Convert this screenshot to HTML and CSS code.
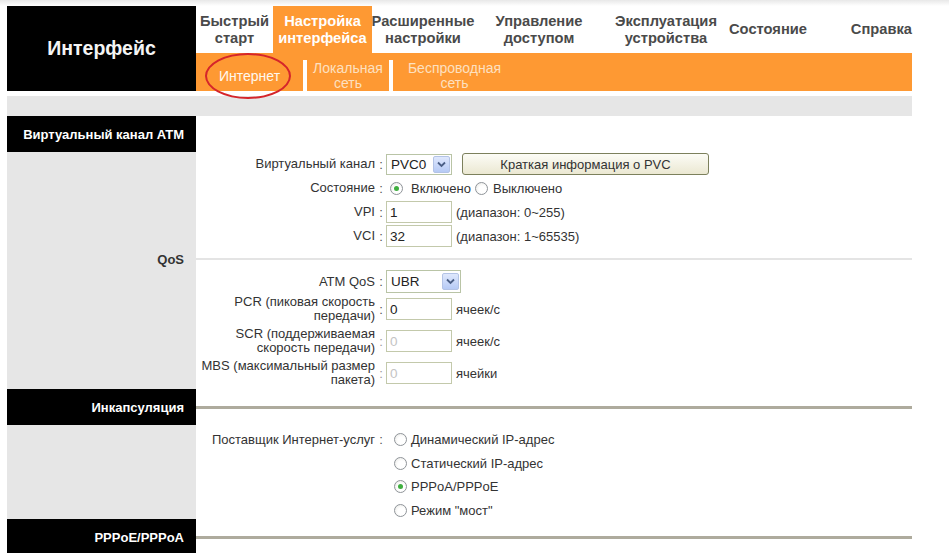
FILE: index.html
```html
<!DOCTYPE html>
<html lang="ru">
<head>
<meta charset="utf-8">
<title>Интерфейс</title>
<link rel="stylesheet" href="styles.css">
</head>
<body>
<div class="page">
  <header class="top">
    <div class="brand">Интерфейс</div>
    <div class="navs">
      <nav class="mainnav">
        <a class="tab t1">Быстрый<br>старт</a>
        <a class="tab t2 active">Настройка<br>интерфейса</a>
        <a class="tab t3">Расширенные<br>настройки</a>
        <a class="tab t4">Управление<br>доступом</a>
        <a class="tab t5">Эксплуатация<br>устройства</a>
        <a class="tab t6">Состояние</a>
        <a class="tab t7">Справка</a>
      </nav>
      <nav class="subnav">
        <a class="sub s1 current">Интернет<span class="ring"></span></a>
        <a class="sub s2">Локальная<br>сеть</a>
        <a class="sub s3">Беспроводная<br>сеть</a>
      </nav>
    </div>
  </header>

  <div class="graybar"></div>

  <main class="grid">
    <div class="head">Виртуальный канал ATM</div>
    <div class="blank"></div>

    <div class="side"></div>
    <div class="form">
      <div class="frow">
        <span class="lbl">Виртуальный канал</span><span class="col">:</span>
        <span class="val">
          <span class="sel w66">PVC0<span class="dd"><svg width="9" height="7" viewBox="0 0 9 7"><path d="M1 1.5 L4.5 5 L8 1.5" fill="none" stroke="#4b5f86" stroke-width="1.8"/></svg></span></span>
          <button class="pvcbtn" type="button">Краткая информация о PVC</button>
        </span>
      </div>
      <div class="frow">
        <span class="lbl">Состояние</span><span class="col">:</span>
        <span class="val">
          <span class="radio on first"></span>Включено<span class="radio second"></span>Выключено
        </span>
      </div>
      <div class="frow">
        <span class="lbl">VPI</span><span class="col">:</span>
        <span class="val"><span class="txt">1</span><span class="hint">(диапазон: 0~255)</span></span>
      </div>
      <div class="frow">
        <span class="lbl">VCI</span><span class="col">:</span>
        <span class="val"><span class="txt">32</span><span class="hint">(диапазон: 1~65535)</span></span>
      </div>
    </div>

    <div class="side qos">QoS</div>
    <div class="rulecell"><div class="rule light"></div></div>

    <div class="side"></div>
    <div class="form">
      <div class="frow r23">
        <span class="lbl">ATM QoS</span><span class="col">:</span>
        <span class="val">
          <span class="sel w74 h23">UBR<span class="dd"><svg width="9" height="7" viewBox="0 0 9 7"><path d="M1 1.5 L4.5 5 L8 1.5" fill="none" stroke="#4b5f86" stroke-width="1.8"/></svg></span></span>
        </span>
      </div>
      <div class="frow r32">
        <span class="lbl">PCR (пиковая скорость<br>передачи)</span><span class="col">:</span>
        <span class="val"><span class="txt">0</span><span class="hint">ячеек/с</span></span>
      </div>
      <div class="frow r32">
        <span class="lbl">SCR (поддерживаемая<br>скорость передачи)</span><span class="col dim">:</span>
        <span class="val"><span class="txt off">0</span><span class="hint">ячеек/с</span></span>
      </div>
      <div class="frow r32">
        <span class="lbl">MBS (максимальный размер<br>пакета)</span><span class="col dim">:</span>
        <span class="val"><span class="txt off">0</span><span class="hint">ячейки</span></span>
      </div>
    </div>

    <div class="head">Инкапсуляция</div>
    <div class="rulecell"><div class="rule dark"></div></div>

    <div class="side"></div>
    <div class="form isp">
      <div class="frow r235">
        <span class="lbl">Поставщик Интернет-услуг</span><span class="col">:</span>
        <span class="val"><span class="radio isp-r"></span>Динамический IP-адрес</span>
      </div>
      <div class="frow r235">
        <span class="lbl"></span><span class="col"></span>
        <span class="val"><span class="radio isp-r"></span>Статический IP-адрес</span>
      </div>
      <div class="frow r235">
        <span class="lbl"></span><span class="col"></span>
        <span class="val"><span class="radio on isp-r"></span>PPPoA/PPPoE</span>
      </div>
      <div class="frow r235">
        <span class="lbl"></span><span class="col"></span>
        <span class="val"><span class="radio isp-r"></span>Режим "мост"</span>
      </div>
    </div>

    <div class="head">PPPoE/PPPoA</div>
    <div class="rulecell"><div class="rule dark"></div></div>
  </main>
</div>
</body>
</html>
```

FILE: styles.css
```css
html, body {
  margin: 0;
  padding: 0;
}

body {
  background: #fff linear-gradient(#e8e8e8, #ffffff 6px) no-repeat;
  background-size: 100% 6px;
  font-family: "Liberation Sans", Arial, sans-serif;
  color: #333;
  overflow: hidden;
}

.page {
  margin: 6px 0 0 7px;
  width: 905px;
}

/* ---------- header ---------- */
.top {
  display: flex;
  height: 85px;
}

.brand {
  width: 189px;
  background: #000;
  color: #f4f4f4;
  font-weight: bold;
  font-size: 19.5px;
  display: flex;
  align-items: center;
  justify-content: center;
}

.navs {
  width: 716px;
  display: flex;
  flex-direction: column;
}

.mainnav {
  height: 47px;
  display: flex;
}

.tab {
  display: flex;
  align-items: center;
  justify-content: center;
  text-align: center;
  font-weight: bold;
  font-size: 14.7px;
  line-height: 17px;
  color: #4a4a4a;
  flex: none;
  white-space: nowrap;
}

.tab.active {
  background: #fe9933;
  color: #fff;
}

.t1 { width: 77px; }
.t2 { width: 99px; }
.t3 { width: 102px; }
.t4 { width: 130px; }
.t5 { width: 124px; }
.t6 { width: 80px; }
.t7 { width: 104px; justify-content: flex-end; }

.subnav {
  height: 38px;
  box-sizing: border-box;
  padding-top: 7px;
  background: #fe9933;
  display: flex;
}

.sub {
  height: 31px;
  display: flex;
  align-items: center;
  justify-content: center;
  text-align: center;
  font-size: 14px;
  line-height: 15px;
  color: #fde0c0;
  flex: none;
}

.s1 {
  border-right: 4px solid #fff;
  position: relative;
  color: #fff8ee;
  padding-top: 1px;
  box-sizing: border-box;
  width: 111px;
}

.s2 {
  width: 86px;
  box-sizing: border-box;
  border-right: 4px solid #fff;
}

.s3 { width: 123px; }

.ring {
  position: absolute;
  left: 9px;
  top: -7px;
  width: 86px;
  height: 46px;
  box-sizing: border-box;
  border: 2px solid #d5252b;
  border-radius: 50%;
}

.graybar {
  margin-top: 5px;
  height: 20px;
  background: #e6e6e6;
}

/* ---------- main grid ---------- */
.grid {
  display: grid;
  grid-template-columns: 189px 716px;
  grid-template-rows: 36px 96px 22px 119px 36px 94px 36px;
}

.head {
  background: #000;
  color: #fff;
  font-weight: bold;
  font-size: 13px;
  display: flex;
  align-items: center;
  justify-content: flex-end;
  padding-right: 12px;
}

.side {
  background: #e6e6e6;
}

.side.qos {
  display: flex;
  align-items: center;
  justify-content: flex-end;
  padding-right: 12px;
  font-weight: bold;
  font-size: 13px;
  color: #333;
}

.rulecell {
  display: flex;
  align-items: center;
}

.rule {
  width: 100%;
}

.rule.light {
  height: 2px;
  background: #e4e4e4;
}

.rule.dark {
  height: 3px;
  background: #aeab9d;
}

/* ---------- form rows ---------- */
.form {
  font-size: 13px;
  color: #333;
}

.frow {
  display: grid;
  grid-template-columns: 180px 10px 1fr;
  align-items: center;
  height: 24px;
}

.frow.r23 { height: 23px; }
.frow.r32 { height: 32px; }
.frow.r235 { height: 23.5px; }

.isp { padding-top: 3px; }

.lbl {
  text-align: right;
  line-height: 14px;
  padding-right: 1px;
  white-space: nowrap;
}

.col {
  text-align: center;
  color: #555;
}

.col.dim { color: #999; }

.val {
  display: flex;
  align-items: center;
  white-space: nowrap;
}

.sel {
  display: inline-flex;
  align-items: center;
  justify-content: space-between;
  box-sizing: border-box;
  height: 21px;
  border: 1px solid #b9c4a6;
  background: #fff;
  padding: 0 1px 0 4px;
  font-size: 13.5px;
  color: #222;
}

.sel.w66 { width: 66px; }
.sel.w74 { width: 75px; }
.sel.h23 { height: 23px; }

.dd {
  width: 17px;
  height: 17px;
  box-sizing: border-box;
  border-radius: 2px;
  background: linear-gradient(#dfe8fd, #b6caf5);
  border: 1px solid #b3c3e6;
  display: flex;
  align-items: center;
  justify-content: center;
}

.pvcbtn {
  margin-left: 10px;
  width: 247px;
  height: 22px;
  box-sizing: border-box;
  border: 1px solid #7c805c;
  border-radius: 3px;
  background: linear-gradient(#fcfcf6, #ebe8d2);
  font-family: "Liberation Sans", Arial, sans-serif;
  font-size: 13px;
  color: #333;
  padding: 0;
}

.txt {
  box-sizing: border-box;
  width: 66px;
  height: 22px;
  border: 1px solid #c3c9ab;
  padding: 0 3px;
  display: flex;
  align-items: center;
  font-size: 13.5px;
  color: #222;
}

.txt.off { color: #c4c4c4; }

.hint {
  margin-left: 4px;
}

.radio {
  width: 13px;
  height: 13px;
  box-sizing: border-box;
  border-radius: 50%;
  border: 1px solid #8f9499;
  background: radial-gradient(circle at 60% 60%, #ffffff 40%, #e4e4e0 100%);
  display: inline-flex;
  align-items: center;
  justify-content: center;
  flex: none;
}

.radio.on::after {
  content: "";
  width: 5px;
  height: 5px;
  border-radius: 50%;
  background: #3fae3f;
}

.radio.first { margin: 0 8px 0 4px; }
.radio.second { margin: 0 5px 0 4px; }
.radio.isp-r { margin: 0 4px 0 8px; }
```
